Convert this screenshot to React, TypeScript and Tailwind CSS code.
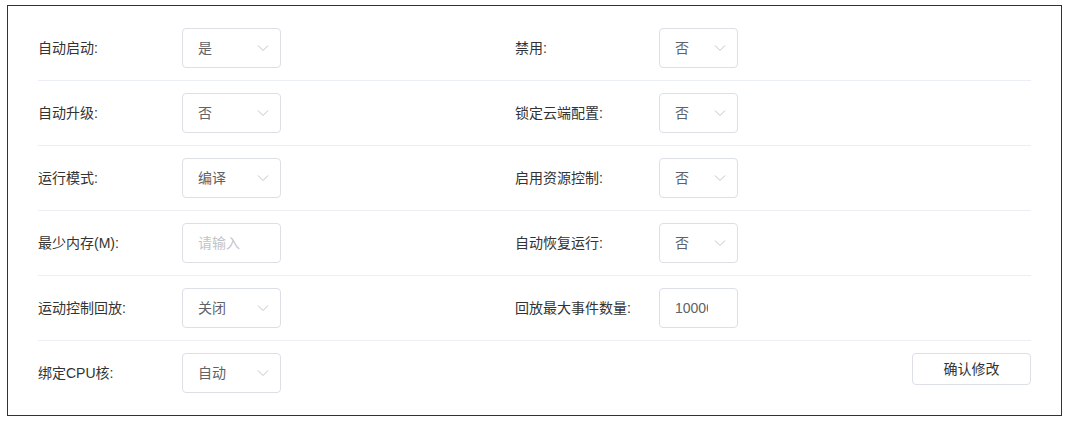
import React from 'react';

const font = { fontFamily: '"Liberation Sans", "Noto Sans CJK SC", sans-serif' };

function Chevron() {
  return (
    <svg width="12" height="8" viewBox="0 0 12 8" className="shrink-0">
      <path d="M1 1.5 L6 6.5 L11 1.5" fill="none" stroke="#c0c4cc" strokeWidth="1" />
    </svg>
  );
}

function Select({ value, wide }: { value: string; wide?: boolean }) {
  return (
    <div
      className={`${wide ? 'w-[99px]' : 'w-[79px]'} h-[40px] border border-[#dcdfe6] rounded-[4px] flex items-center pl-[15px] pr-[11px] bg-white`}
    >
      <span className="flex-1 text-[14px] text-[#606266]">{value}</span>
      <Chevron />
    </div>
  );
}

function Input({ value, placeholder, wide }: { value?: string; placeholder?: string; wide?: boolean }) {
  return (
    <input
      readOnly
      value={value ?? ''}
      placeholder={placeholder}
      style={font}
      className={`${wide ? 'w-[99px]' : 'w-[79px]'} h-[40px] border border-[#dcdfe6] rounded-[4px] pl-[15px] pr-[29px] text-[14px] text-[#606266] placeholder:text-[#c0c4cc] outline-none bg-white`}
    />
  );
}

function Field({ label, children }: { label: string; children: React.ReactNode }) {
  return (
    <div className="flex items-center">
      <span className="w-[144px] shrink-0 text-[14px] text-[#333]">{label}</span>
      {children}
    </div>
  );
}

const rows: { left: [string, React.ReactNode]; right: [string, React.ReactNode] }[] = [
  { left: ['自动启动:', <Select value="是" wide />], right: ['禁用:', <Select value="否" />] },
  { left: ['自动升级:', <Select value="否" wide />], right: ['锁定云端配置:', <Select value="否" />] },
  { left: ['运行模式:', <Select value="编译" wide />], right: ['启用资源控制:', <Select value="否" />] },
  { left: ['最少内存(M):', <Input placeholder="请输入" wide />], right: ['自动恢复运行:', <Select value="否" />] },
  { left: ['运动控制回放:', <Select value="关闭" wide />], right: ['回放最大事件数量:', <Input value="10000" />] },
];

export default function App() {
  return (
    <div className="w-[1068px] h-[425px] bg-white pl-[7px] pt-[5px]" style={font}>
      <div className="w-[1055px] border border-[#333] px-[30px] pt-[10px] pb-[10px]">
        {rows.map((r, i) => (
          <div key={i} className="flex py-[12px] border-b border-[#ebeef5]">
            <div className="w-[477px] shrink-0">
              <Field label={r.left[0]}>{r.left[1]}</Field>
            </div>
            <div className="flex-1">
              <Field label={r.right[0]}>{r.right[1]}</Field>
            </div>
          </div>
        ))}
        <div className="flex py-[12px]">
          <div className="w-[477px] shrink-0">
            <Field label="绑定CPU核:">
              <Select value="自动" wide />
            </Field>
          </div>
          <div className="flex-1 flex justify-end">
            <button className="w-[119px] h-[32px] border border-[#dcdfe6] rounded-[4px] text-[14px] text-[#333] bg-white">
              确认修改
            </button>
          </div>
        </div>
      </div>
    </div>
  );
}
